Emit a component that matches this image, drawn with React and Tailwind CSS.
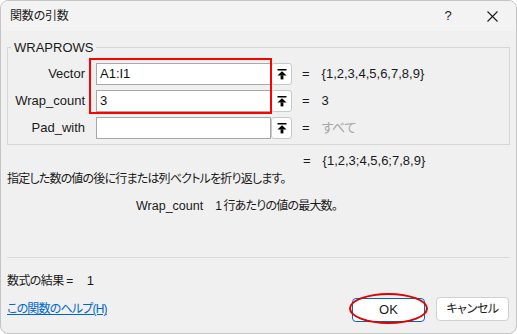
import React from 'react';

const font = { fontFamily: '"Liberation Sans", "Noto Sans CJK JP", sans-serif' };

const RefIcon = () => (
    <svg width="10" height="11" viewBox="0 0 10 11" fill="#000">
        <rect x="0.5" y="0" width="9" height="1.5" />
        <polygon points="5,2.2 9.5,6.6 0.5,6.6" />
        <rect x="3.6" y="6.4" width="2.8" height="4" />
    </svg>
);

const ArgRow = ({ label, value, result, muted }) => (
    <div className="flex items-center h-[22px]">
        <div className="w-[77px] text-right text-[13px] text-[#1a1a1a]">{label}</div>
        <div className="ml-[11px] w-[175px] h-[22px] bg-white border border-[#a8a8a8] flex items-center pl-[3px] text-[13px] text-[#111]">
            {value}
        </div>
        <div className="w-[21px] h-[22px] bg-white border border-[#c8c8c8] rounded-[3px] flex items-center justify-center">
            <RefIcon />
        </div>
        <div className="ml-[10px] text-[13px] text-[#1a1a1a]">=</div>
        <div className={`ml-[12px] text-[13px] ${muted ? 'text-[#a6a6a6] tracking-[-0.5px]' : 'text-[#1a1a1a]'}`}>{result}</div>
    </div>
);

export default function App() {
    return (
        <div className="w-[517px] h-[334px] bg-white [font-feature-settings:'palt']" style={font}>
            <div className="h-full flex flex-col rounded-[8px] border border-[#c4c4c4] bg-[#f0f0f0] overflow-hidden">
                {/* title bar */}
                <div className="h-[30px] shrink-0 flex items-center bg-[#f3f3f3]">
                    <div className="pl-[9px] text-[12px] tracking-[-0.2px] text-[#1a1a1a] flex-1">関数の引数</div>
                    <div className="w-[30px] text-center text-[13px] text-[#1a1a1a] mr-[24px]">?</div>
                    <svg className="mr-[18px]" width="11" height="11" viewBox="0 0 11 11" stroke="#1a1a1a" strokeWidth="1.1">
                        <line x1="0.5" y1="0.5" x2="10.5" y2="10.5" />
                        <line x1="10.5" y1="0.5" x2="0.5" y2="10.5" />
                    </svg>
                </div>

                <div className="px-[6px] flex flex-col flex-1">
                    <fieldset className="mt-[9px] border border-[#d6d6d6] pb-[5px]">
                        <legend className="ml-[3px] px-[3px] text-[13px] text-[#1a1a1a] leading-[15px]">WRAPROWS</legend>
                        <div className="relative mt-[8px] flex flex-col gap-[5px]">
                            <ArgRow label="Vector" value="A1:I1" result="{1,2,3,4,5,6,7,8,9}" />
                            <ArgRow label="Wrap_count" value="3" result="3" />
                            <ArgRow label="Pad_with" value="" result="すべて" muted />
                            <div className="absolute left-[81px] top-[-5px] w-[183px] h-[56px] border-2 border-[#ff0000]" />
                        </div>
                    </fieldset>

                    <div className="mt-[7px] flex text-[13px] text-[#1a1a1a] h-[18px] items-center">
                        <span className="ml-[296px]">=</span>
                        <span className="ml-[12px]">{'{1,2,3;4,5,6;7,8,9}'}</span>
                    </div>
                    <div className="mt-[0px] text-[12px] tracking-[-0.8px] text-[#1a1a1a] h-[18px] flex items-center">
                        指定した数の値の後に行または列ベクトルを折り返します。
                    </div>
                    <div className="mt-[9px] text-[12.5px] text-[#1a1a1a] h-[18px] flex items-center pl-[129px]">
                        <span>Wrap_count</span>
                        <span className="ml-[12px] text-[12px] tracking-[-0.8px]">1 行あたりの値の最大数。</span>
                    </div>

                    <div className="mt-[42px] border-t border-[#dadada]" />

                    <div className="mt-[14px] text-[13px] text-[#1a1a1a] h-[18px] flex items-center">
                        <span className="text-[12px] tracking-[-0.6px]">数式の結果 =</span>
                        <span className="ml-[14px]">1</span>
                    </div>

                    <div className="mt-[7px] flex items-center">
                        <a className="text-[12px] tracking-[-0.8px] text-[#0066cc] underline flex-1">この関数のヘルプ(H)</a>
                        <div className="relative">
                            <button className="w-[73px] h-[24px] bg-white border border-[#0067c0] rounded-[4px] text-[13px] text-[#1a1a1a]">OK</button>
                            <div className="absolute left-[-3px] top-[-4px] w-[79px] h-[31px] rounded-[50%] border-2 border-[#e00000]" />
                        </div>
                        <button className="ml-[11px] mr-[1px] w-[73px] h-[24px] bg-white border border-[#d0d0d0] rounded-[4px] text-[12px] tracking-[-0.4px] text-[#1a1a1a]">キャンセル</button>
                    </div>
                </div>
            </div>
        </div>
    );
}
